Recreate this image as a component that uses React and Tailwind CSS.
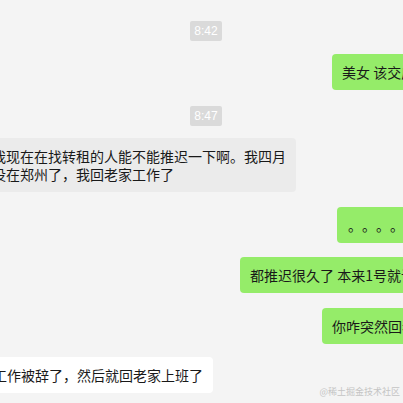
import React from 'react';

const TimeTag = ({ time, className = '' }) => (
  <div className={`flex ${className}`}>
    <span className="ml-[190px] h-[20px] w-[32px] rounded-[2px] bg-[#dadada] text-center text-[12px] leading-[20px] text-white font-['Liberation_Sans',sans-serif]">
      {time}
    </span>
  </div>
);

const Mine = ({ left, children, className = '' }) => (
  <div className={`flex whitespace-nowrap ${className}`} style={{ paddingLeft: left }}>
    <div className="flex shrink-0 rounded-[4px] bg-[#95ec69] px-[10px] py-[9px] text-[14px] leading-[18px] text-[#191919]">
      {children}
    </div>
  </div>
);

const App = () => {
  return (
    <div className="relative h-[403px] w-[403px] overflow-hidden bg-[#f4f4f4] font-['Noto_Sans_CJK_SC','Microsoft_YaHei',sans-serif]">
      <div className="flex flex-col pt-[21px]">
        <TimeTag time="8:42" />

        <Mine left={332} className="mt-[13px]">美女 该交房租了</Mine>

        <TimeTag time="8:47" className="mt-[16px]" />

        <div className="mt-[12px] flex">
          <div className="ml-[-18px] shrink-0 whitespace-nowrap rounded-[4px] bg-[#ebebeb] px-[10px] py-[9px] text-[14px] leading-[18px] text-[#191919]">
            我现在在找转租的人能不能推迟一下啊。我四月
            <br />
            没在郑州了，我回老家工作了
          </div>
        </div>

        <Mine left={337} className="mt-[15px]">
          {['。', '。', '。', '。', '。', '。'].map((d, i) => (
            <span key={i} className="inline-block w-[14px] pl-[1px]">{d}</span>
          ))}
        </Mine>

        <Mine left={240} className="mt-[14px]">都推迟很久了 本来1号就该交了</Mine>

        <Mine left={322} className="mt-[15px]">你咋突然回老家了</Mine>

        <div className="mt-[13px] flex">
          <div className="ml-[-17px] shrink-0 whitespace-nowrap rounded-[4px] bg-white px-[10px] py-[9px] text-[14px] leading-[18px] text-[#191919]">
            工作被辞了，然后就回老家上班了
          </div>
        </div>
      </div>

      <span className="absolute bottom-[6px] right-[3px] text-[9px] leading-[10px] text-[#c4c4c4]">
        @稀土掘金技术社区
      </span>
    </div>
  );
};

export default App;
